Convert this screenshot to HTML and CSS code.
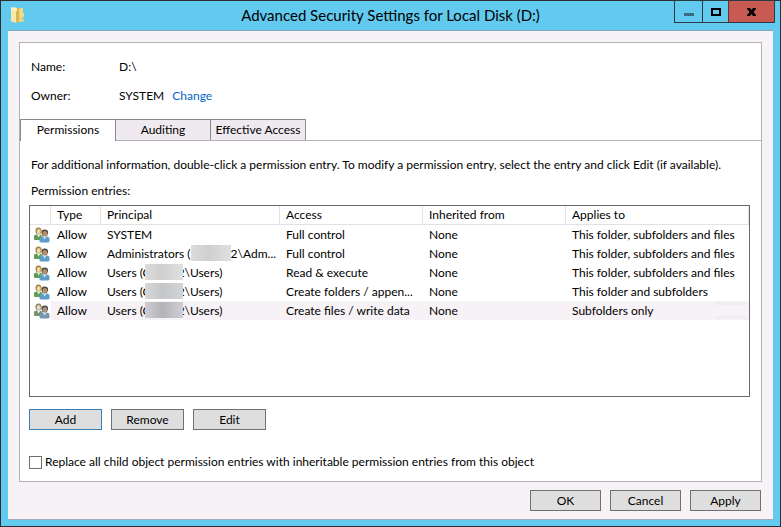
FILE: index.html
```html
<!DOCTYPE html>
<html lang="en">
  <head>
    <meta charset="utf-8">
    <title>Advanced Security Settings for Local Disk (D:)</title>
    <link rel="stylesheet" href="styles.css">
  </head>
  <body>
    <!-- shared icons -->
    <svg class="sprite" aria-hidden="true">
      <symbol id="users" viewBox="0 0 16 16">
        <path d="M0 12V9.500Q0 7.500 3 7.500H6Q8 7.500 8 9.500V13H1Q0 13 0 12Z" fill="#5f9c50"/>
        <path d="M3 7.500L4.500 10.500 6.500 7.500Z" fill="#e8efdc"/>
        <path d="M1.500 5Q1 0.500 4.500 0.500Q8 0.500 7.500 5L6.500 7H2.500Z" fill="#a8813f"/>
        <ellipse cx="4.700" cy="4.500" rx="2" ry="2.600" fill="#f1d8a8"/>
        <path d="M5.500 14.500V12Q5.500 9.500 8.500 9.500H12.500Q15.500 9.500 15.500 12V14.500Q15 15.500 13.500 15.500H7.500Q5.500 15.500 5.500 14.500Z" fill="#5b9cc8"/>
        <path d="M9 9.500L10.500 12.500 12.500 9.500Z" fill="#dcebf5"/>
        <path d="M7.500 6Q7 2.500 10.700 2.500Q14.500 2.500 14 6L13 9H8.500Z" fill="#4c4843"/>
        <ellipse cx="10.800" cy="6.700" rx="2.300" ry="2.800" fill="#b98f68"/>
      </symbol>
    </svg>

    <div class="window">
      <div class="titlebar">
        <svg class="folder" viewBox="0 0 14 17" aria-hidden="true">
          <path d="M3 1H12V6H13V14L11 15H3Z" fill="#e6c969"/>
          <path d="M8 1.500H12V6H13V14L9 14.500Z" fill="#f0db8c"/>
          <path d="M0 0.500L6 1.500V16L0 14.500Z" fill="#f8eaa6"/>
          <path d="M5 1.500L8 0.500V13.500L5 16Z" fill="#d9b650"/>
          <path d="M0 0.500H5L6 1.500V4L0 3Z" fill="#fbf3c4"/>
          <path d="M11.500 10H12.500V13H11.500Z" fill="#7da7c4"/>
        </svg>
        <h1 class="title">Advanced Security Settings for Local Disk (D:)</h1>
        <div class="controls">
          <button class="ctl min" aria-label="Minimize">
            <svg width="10" height="3"><rect width="10" height="3" fill="#3a6b7e"/></svg>
          </button>
          <button class="ctl max" aria-label="Maximize">
            <svg width="10" height="8"><rect x="1" y="1" width="8" height="6" fill="none" stroke="#000" stroke-width="2"/></svg>
          </button>
          <button class="ctl close" aria-label="Close">
            <svg width="9" height="8" viewBox="0 0 9 8"><path d="M0 0H3L4.500 2 6 0H9V1L6.500 4 9 7V8H6L4.500 6 3 8H0V7L2.500 4 0 1Z"/></svg>
          </button>
        </div>
      </div>

      <div class="client">
        <div class="panel">
          <dl class="info">
            <dt>Name:</dt>
            <dd>D:\</dd>
            <dt>Owner:</dt>
            <dd>SYSTEM <a class="change" href="#">Change</a></dd>
          </dl>

          <div class="tabs" role="tablist">
            <button class="tab active" role="tab" aria-selected="true">Permissions</button>
            <button class="tab" role="tab" aria-selected="false">Auditing</button>
            <button class="tab" role="tab" aria-selected="false">Effective Access</button>
          </div>

          <div class="page">
            <p class="hint">For additional information, double-click a permission entry. To modify a permission entry, select the entry and click Edit (if available).</p>
            <p class="label" id="entries">Permission entries:</p>

            <div class="list">
              <table class="entries" aria-labelledby="entries">
                <colgroup>
                  <col class="c-icon"><col class="c-type"><col class="c-principal"><col class="c-access"><col class="c-inherited"><col>
                </colgroup>
                <thead>
                  <tr><th></th><th>Type</th><th>Principal</th><th>Access</th><th>Inherited from</th><th>Applies to</th></tr>
                </thead>
                <tbody>
                  <tr>
                    <td class="ico"><svg class="users"><use href="#users"/></svg></td>
                    <td>Allow</td><td>SYSTEM</td><td>Full control</td><td>None</td><td>This folder, subfolders and files</td>
                  </tr>
                  <tr>
                    <td class="ico"><svg class="users"><use href="#users"/></svg></td>
                    <td>Allow</td><td>Administrators (<span class="masked"></span>2\Adm...</td><td>Full control</td><td>None</td><td>This folder, subfolders and files</td>
                  </tr>
                  <tr>
                    <td class="ico"><svg class="users"><use href="#users"/></svg></td>
                    <td>Allow</td><td>Users (C<span class="masked over"></span>2\Users)</td><td>Read &amp; execute</td><td>None</td><td>This folder, subfolders and files</td>
                  </tr>
                  <tr>
                    <td class="ico"><svg class="users"><use href="#users"/></svg></td>
                    <td>Allow</td><td>Users (C<span class="masked over dark"></span>2\Users)</td><td>Create folders / appen...</td><td>None</td><td>This folder and subfolders</td>
                  </tr>
                  <tr class="selected">
                    <td class="ico"><svg class="users dim"><use href="#users"/></svg></td>
                    <td>Allow</td><td>Users (C<span class="masked over darker"></span>2\Users)</td><td>Create files / write data</td><td>None</td><td>Subfolders only<span class="smudge"></span></td>
                  </tr>
                </tbody>
              </table>
            </div>

            <div class="actions">
              <button class="btn focus">Add</button>
              <button class="btn">Remove</button>
              <button class="btn">Edit</button>
            </div>

            <label class="replace"><input class="check" type="checkbox">Replace all child object permission entries with inheritable permission entries from this object</label>
          </div>
        </div>

        <div class="footer">
          <button class="btn">OK</button>
          <button class="btn">Cancel</button>
          <button class="btn">Apply</button>
        </div>
      </div>
    </div>
  </body>
</html>
```
FILE: styles.css
```css
*{
  box-sizing: border-box;
}
body{
  margin: 0;
  font-family: Lato, "Open Sans", sans-serif;
  font-size: 12px;
  line-height: 18px;
  color: #000;
}
button{
  font: inherit;
  color: inherit;
  padding: 0;
}
.sprite{
  position: absolute;
  width: 0;
  height: 0;
}

/* window frame */
.window{
  display: flex;
  flex-direction: column;
  min-height: 100vh;
  padding: 0 7px 6px;
  border: 1px solid #2f2f33;
  background-color: #62caef;
}
.titlebar{
  display: grid;
  grid-template-columns: 1fr auto 1fr;
  height: 29px;
}
.folder{
  width: 14px;
  height: 17px;
  margin: 6px 0 0 3px;
}
.title{
  margin: 2px 0 0;
  font-size: 15px;
  font-weight: normal;
  line-height: 24px;
  white-space: nowrap;
}
.controls{
  display: flex;
  justify-self: end;
  margin: -1px -2px 0 0;
  height: 23px;
}
.ctl{
  display: flex;
  align-items: center;
  justify-content: center;
  border: 1px solid #2b3940;
  background-color: transparent;
}
.min{
  width: 29px;
  padding-top: 5px;
}
.max{
  width: 26px;
  border-left: 0;
}
.close{
  width: 47px;
  border-left-color: #5d3532;
  margin-left: -1px;
  background-color: #c75a52;
}

.client{
  display: flex;
  flex-direction: column;
  flex: 1;
  padding: 11px 11px 8px;
  border-top: 1px solid #86a5b8;
  border-bottom: 1px solid #9fa9c0;
  background-color: #f6f2f6;
}
.panel{
  display: flex;
  flex-direction: column;
  flex: 1;
  border: 1px solid #b4b2b4;
  background-color: #fff;
}

.info{
  display: grid;
  grid-template-columns: 88px 1fr;
  row-gap: 11px;
  margin: 15px 0 14px 11px;
}
.info dd{
  margin: 0;
}
.change{
  margin-left: 5px;
  color: #0066cc;
  text-decoration: none;
}

/* tabs */
.tabs{
  display: flex;
  height: 22px;
  border-bottom: 1px solid #b4b2b4;
}
.tab{
  width: 96px;
  height: 21px;
  margin-right: -1px;
  border: 1px solid #88888e;
  border-bottom: 0;
  background-color: #efeaef;
  white-space: nowrap;
}
.tab.active{
  height: 22px;
  padding-bottom: 1px;
  background-color: #fff;
}

.page{
  display: flex;
  flex-direction: column;
  flex: 1;
  padding: 15px 11px 10px 9px;
}
.hint,
.label{
  margin: 0 0 8px 2px;
  white-space: nowrap;
}
.label{
  margin-bottom: 5px;
}

/* permission entries */
.list{
  flex: 1;
  border: 1px solid #69696c;
  background-color: #fff;
}
.entries{
  width: 100%;
  table-layout: fixed;
  border-collapse: separate;
  border-spacing: 0;
}
.c-icon{
  width: 21px;
}
.c-type{
  width: 50px;
}
.c-principal{
  width: 179px;
}
.c-access,
.c-inherited{
  width: 143px;
}
.entries th,
.entries td{
  height: 19px;
  padding: 0 0 0 6px;
  font-weight: normal;
  text-align: left;
  white-space: nowrap;
}
.entries th{
  border-right: 1px solid #e5e0e5;
  border-bottom: 1px solid #e5e0e5;
}
.entries .ico{
  padding: 0 0 0 4px;
  background-color: #fff;
}
.users{
  display: block;
  width: 16px;
  height: 16px;
}
.dim{
  filter: saturate(0.5);
}
.selected{
  background-color: #f6f2f6;
}
.masked{
  display: inline-block;
  width: 40px;
  height: 16px;
  vertical-align: top;
  background: linear-gradient(90deg, #dcdcdc, #cfcfcf 45%, #e0e0e0);
}
/* hides most of the letters on both sides */
.over{
  position: relative;
  margin: 0 -5px 0 -6px;
  width: 38px;
}
.dark{
  background: linear-gradient(90deg, #d8d8d8, #c4c6c8 45%, #d4d4d6);
}
.darker{
  background: linear-gradient(90deg, #d0ced2, #b4b4b8 45%, #cfced2);
}
.smudge{
  float: right;
  width: 32px;
  height: 17px;
  margin-right: 2px;
  border: solid #eeeef0;
  border-width: 3px 0;
}

/* buttons */
.btn{
  width: 71px;
  height: 21px;
  border: 1px solid #707072;
  background-color: #dedede;
}
.focus{
  border-color: #3a7fb4;
}
.actions{
  display: flex;
  gap: 9px;
  margin: 12px 0 23px;
}
.actions .btn{
  width: 73px;
}
.replace{
  display: flex;
  align-items: center;
  gap: 3px;
  white-space: nowrap;
}
.check{
  appearance: none;
  width: 13px;
  height: 13px;
  margin: 0;
  border: 1px solid #707072;
  background-color: #fff;
}
.check:checked{
  background-color: #3a7fb4;
}
.footer{
  display: flex;
  justify-content: flex-end;
  gap: 9px;
  margin: 8px 1px 0 0;
}
```
